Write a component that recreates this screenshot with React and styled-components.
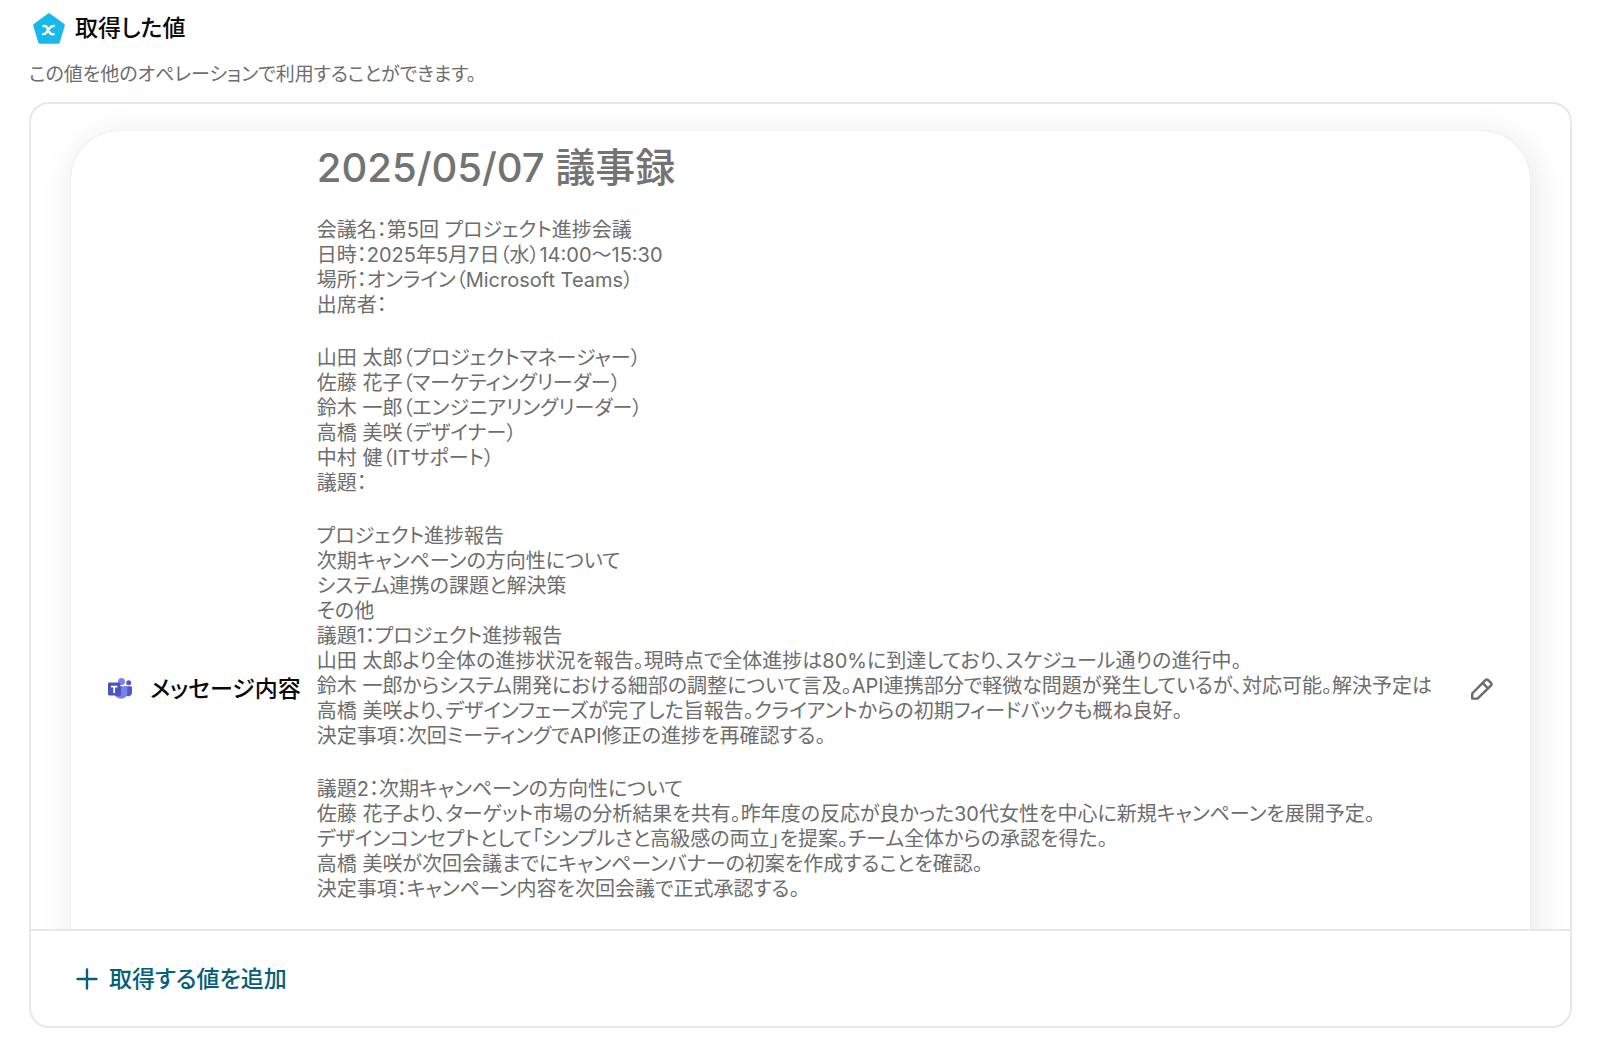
import React from "react";
import styled, { createGlobalStyle } from "styled-components";

const GlobalStyle = createGlobalStyle`
  *, *::before, *::after { box-sizing: border-box; }
  body {
    margin: 0;
    background: #fff;
    color: #0a0a0a;
    font-family: Inter, "Noto Sans CJK JP", sans-serif;
    font-feature-settings: "palt";
  }
  h1, h2, p { margin: 0; }
  button {
    border: 0;
    padding: 0;
    background: none;
    font: inherit;
    font-feature-settings: inherit;
    cursor: pointer;
  }
  svg { display: block; flex: none; }
`;

const Page = styled.main`
  display: flex;
  flex-direction: column;
  height: 100vh;
  padding: 12px 28px 20px 29px;
`;

const TitleRow = styled.header`
  display: flex;
  align-items: center;
  gap: 10px;
  padding-left: 4px;
`;

const Title = styled.h1`
  font-size: 23px;
  line-height: 32px;
  font-weight: 500;
`;

const Description = styled.p`
  margin-top: 18px;
  color: #6d6d6d;
  font-size: 19px;
  line-height: 26px;
  font-weight: 390;
`;

const Panel = styled.section`
  display: flex;
  flex-direction: column;
  flex: 1;
  min-height: 0;
  margin-top: 14px;
  border: 2px solid #e8e8e8;
  border-radius: 20px;
  overflow: hidden;
`;

const Values = styled.div`
  flex: 1;
  min-height: 0;
  padding: 27px 40px;
  overflow: hidden;
`;

const ValueCard = styled.article`
  display: flex;
  align-items: center;
  border-radius: 48px;
  padding: 0 36px 0 37px;
  background: #fff;
  box-shadow: 0 0 1px rgba(0, 0, 0, 0.16), 4px 6px 36px rgba(0, 0, 0, 0.1);
`;

const ValueName = styled.h2`
  flex: none;
  margin: 0 16px 0 18px;
  font-size: 23px;
  line-height: 32px;
  font-weight: 500;
  white-space: nowrap;
`;

const ValueText = styled.div`
  flex: 1;
  min-width: 0;
  padding: 12px 0 344px;
  overflow: hidden;
  color: #6d6d6d;
  white-space: nowrap;
`;

const NoteTitle = styled.h1`
  margin-bottom: 25px;
  color: #737373;
  font-size: 40px;
  line-height: 50px;
  font-weight: 500;
`;

const Paragraph = styled.p`
  font-size: 20px;
  line-height: 25px;
  font-weight: 390;
  white-space: pre;

  & + & { margin-top: 28px; }
`;

const EditButton = styled.button`
  flex: none;
  margin-left: 28px;
  color: #6b6b6b;
`;

const Footer = styled.footer`
  flex: none;
  padding: 32px 44px 31px;
  border-top: 2px solid #e8e8e8;
`;

const AddButton = styled.button`
  display: flex;
  align-items: center;
  gap: 10px;
  color: #055f7a;
  font-size: 23px;
  line-height: 32px;
  font-weight: 500;
`;

const paragraphs = [
  [
    "会議名：第5回 プロジェクト進捗会議",
    "日時：2025年5月7日（水）14:00〜15:30",
    "場所：オンライン（Microsoft Teams）",
    "出席者：",
  ],
  [
    "山田 太郎（プロジェクトマネージャー）",
    "佐藤 花子（マーケティングリーダー）",
    "鈴木 一郎（エンジニアリングリーダー）",
    "高橋 美咲（デザイナー）",
    "中村 健（ITサポート）",
    "議題：",
  ],
  [
    "プロジェクト進捗報告",
    "次期キャンペーンの方向性について",
    "システム連携の課題と解決策",
    "その他",
    "議題1：プロジェクト進捗報告",
    "山田 太郎より全体の進捗状況を報告。現時点で全体進捗は80%に到達しており、スケジュール通りの進行中。",
    "鈴木 一郎からシステム開発における細部の調整について言及。API連携部分で軽微な問題が発生しているが、対応可能。解決予定は",
    "高橋 美咲より、デザインフェーズが完了した旨報告。クライアントからの初期フィードバックも概ね良好。",
    "決定事項：次回ミーティングでAPI修正の進捗を再確認する。",
  ],
  [
    "議題2：次期キャンペーンの方向性について",
    "佐藤 花子より、ターゲット市場の分析結果を共有。昨年度の反応が良かった30代女性を中心に新規キャンペーンを展開予定。",
    "デザインコンセプトとして「シンプルさと高級感の両立」を提案。チーム全体からの承認を得た。",
    "高橋 美咲が次回会議までにキャンペーンバナーの初案を作成することを確認。",
    "決定事項：キャンペーン内容を次回会議で正式承認する。",
  ],
];

function VariableIcon() {
  return (
    <svg width="32" height="32" viewBox="0 0 32 32" aria-hidden="true">
      <path
        d="M16 3.4 29.8 13.4 24.8 29.8H7.2L2.2 13.4Z"
        fill="#16b9ea"
        stroke="#16b9ea"
        strokeWidth="4"
        strokeLinejoin="round"
      />
      <path
        d="M10.4 14c2-.3 2.9.1 3.7 1.6l2.6 5c.8 1.5 1.8 2 3.9 1.6M20.8 14c-1.9-.2-2.8.3-3.9 1.7l-3.2 4.6c-1 1.4-1.6 1.9-3.6 1.8"
        fill="none"
        stroke="#fff"
        strokeWidth="2.4"
        strokeLinecap="round"
      />
    </svg>
  );
}

function TeamsIcon() {
  return (
    <svg width="24" height="22" viewBox="0 0 24 22" aria-hidden="true">
      <circle cx="20.7" cy="4.8" r="2.5" fill="#5059c9" />
      <path d="M16.5 8.2h6.4c.6 0 1.1.5 1.1 1.1v5.2a3.9 3.9 0 0 1-7.5 1.4Z" fill="#5059c9" />
      <circle cx="13.5" cy="3.6" r="3.5" fill="#7b83eb" />
      <path d="M8 8.2h10.2c.6 0 1.1.5 1.1 1.1v6.3a6.3 6.3 0 0 1-12.4 0V9.3c0-.6.5-1.1 1.1-1.1Z" fill="#7b83eb" />
      <path d="M7 8.2h6.3v8.6c0 .8-.6 1.4-1.4 1.4H7.5a7 7 0 0 1-.6-2.6V9Z" fill="#5a62c3" />
      <rect x="0" y="4.6" width="12.4" height="12.8" rx="1.1" fill="#4b53bc" />
      <path d="M3 7.8h6.4v1.7H7.1v5.4H5.3V9.5H3Z" fill="#fff" />
    </svg>
  );
}

function PencilIcon() {
  return (
    <svg width="24" height="24" viewBox="0 0 24 24" fill="none" stroke="currentColor" strokeWidth="2.4" strokeLinejoin="round" aria-hidden="true">
      <path d="M2.2 21.6v-5.1L15.4 3.1a2 2 0 0 1 2.8 0l2.7 2.7a2 2 0 0 1 0 2.8L7.5 21.6ZM12.6 5.9l5.3 5.5" />
    </svg>
  );
}

function PlusIcon() {
  return (
    <svg width="24" height="24" viewBox="0 0 24 24" fill="none" stroke="currentColor" strokeWidth="2.4" strokeLinecap="round" aria-hidden="true">
      <path d="M12 2.5v19M2.5 12h19" />
    </svg>
  );
}

export default function App() {
  return (
    <>
      <GlobalStyle />
      <Page>
        <TitleRow>
          <VariableIcon />
          <Title>取得した値</Title>
        </TitleRow>
        <Description>この値を他のオペレーションで利用することができます。</Description>
        <Panel>
          <Values>
            <ValueCard>
              <TeamsIcon />
              <ValueName>メッセージ内容</ValueName>
              <ValueText>
                <NoteTitle>2025/05/07 議事録</NoteTitle>
                {paragraphs.map((lines) => (
                  <Paragraph key={lines[0]}>{lines.join("\n")}</Paragraph>
                ))}
              </ValueText>
              <EditButton type="button" aria-label="編集">
                <PencilIcon />
              </EditButton>
            </ValueCard>
          </Values>
          <Footer>
            <AddButton type="button">
              <PlusIcon />
              取得する値を追加
            </AddButton>
          </Footer>
        </Panel>
      </Page>
    </>
  );
}
